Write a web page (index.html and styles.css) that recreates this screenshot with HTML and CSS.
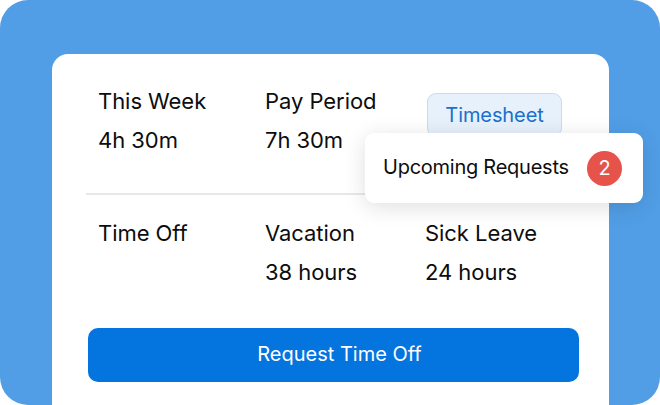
FILE: index.html
```html
<!DOCTYPE html>
<html>
<head>
<meta charset="utf-8">
<link rel="stylesheet" href="styles.css">
</head>
<body>
<div class="frame">
  <div class="card">
    <div class="stats">
      <div class="stat">
        <div class="label">This Week</div>
        <div class="value">4h 30m</div>
      </div>
      <div class="stat">
        <div class="label">Pay Period</div>
        <div class="value">7h 30m</div>
      </div>
      <div class="stat">
        <button class="timesheet">Timesheet</button>
      </div>
    </div>
    <div class="divider"></div>
    <div class="stats stats-second">
      <div class="stat">
        <div class="label">Time Off</div>
      </div>
      <div class="stat">
        <div class="label">Vacation</div>
        <div class="value">38 hours</div>
      </div>
      <div class="stat">
        <div class="label">Sick Leave</div>
        <div class="value">24 hours</div>
      </div>
    </div>
    <button class="request">Request Time Off</button>
    <div class="popup">
      <span class="popup-text">Upcoming Requests</span>
      <span class="badge">2</span>
    </div>
  </div>
</div>
</body>
</html>
```

FILE: styles.css
```css
html, body {
  margin: 0;
  padding: 0;
  background: #ffffff;
}

body {
  font-family: Inter, "Noto Sans", sans-serif;
  color: #0d0d0d;
}

.frame {
  width: 660px;
  height: 405px;
  box-sizing: border-box;
  border-radius: 28px;
  background: #519ee6;
  padding: 54px 51px 0 52px;
  overflow: hidden;
}

.card {
  position: relative;
  height: 380px;
  box-sizing: border-box;
  background: #ffffff;
  border-radius: 16px;
  padding: 28px 30px 0 36px;
}

.stats {
  display: grid;
  grid-template-columns: 167px 160px 1fr;
  padding-left: 10px;
}

.stat {
  display: flex;
  flex-direction: column;
}

.label,
.value {
  font-size: 22px;
  line-height: 39px;
  letter-spacing: -0.05px;
  white-space: nowrap;
}

.timesheet {
  margin: 11px 0 0 2px;
  width: 135px;
  height: 44px;
  box-sizing: border-box;
  border: 1.5px solid #c6dcf1;
  border-radius: 9px;
  background: #e6f1fc;
  color: #1a6fcf;
  font-family: Inter, "Noto Sans", sans-serif;
  font-size: 20px;
  letter-spacing: -0.1px;
  padding: 0;
}

.divider {
  height: 2px;
  background: #e8e8e8;
  margin: 33px 0 19px -2px;
}

.request {
  display: block;
  width: 100%;
  height: 54px;
  margin-top: 36px;
  border: none;
  border-radius: 10px;
  background: #0474de;
  color: #ffffff;
  font-family: Inter, "Noto Sans", sans-serif;
  font-size: 20px;
  letter-spacing: 0;
  padding: 0 0 2px 12px;
}

.popup {
  position: absolute;
  left: 313px;
  top: 79px;
  width: 278px;
  height: 70px;
  box-sizing: border-box;
  display: flex;
  align-items: center;
  justify-content: space-between;
  padding: 0 21px 0 18px;
  background: #ffffff;
  border-radius: 9px;
  box-shadow: 0 4px 22px rgba(0, 0, 0, 0.13);
}

.popup-text {
  font-size: 20px;
  letter-spacing: -0.25px;
  color: #0d0d0d;
  margin-bottom: 3px;
}

.badge {
  width: 35px;
  height: 35px;
  border-radius: 50%;
  background: #e5534b;
  color: #ffffff;
  font-size: 20px;
  display: flex;
  align-items: center;
  justify-content: center;
}
```
